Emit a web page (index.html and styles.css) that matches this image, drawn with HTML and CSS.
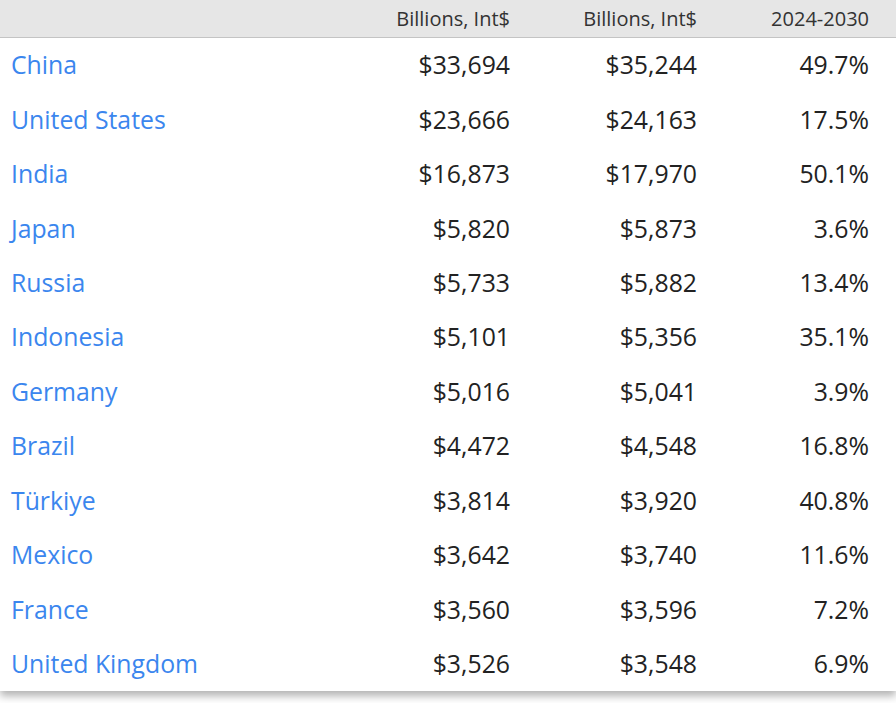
FILE: index.html
```html
<!DOCTYPE html>
<html>
<head>
<meta charset="utf-8">
<link rel="stylesheet" href="styles.css">
</head>
<body>
<div class="card">
<table class="gdp">
<thead>
<tr><th class="name"></th><th>Billions, Int$</th><th>Billions, Int$</th><th>2024-2030</th></tr>
</thead>
<tbody>
<tr><td class="name"><a href="#">China</a></td><td>$33,694</td><td>$35,244</td><td>49.7%</td></tr>
<tr><td class="name"><a href="#">United States</a></td><td>$23,666</td><td>$24,163</td><td>17.5%</td></tr>
<tr><td class="name"><a href="#">India</a></td><td>$16,873</td><td>$17,970</td><td>50.1%</td></tr>
<tr><td class="name"><a href="#">Japan</a></td><td>$5,820</td><td>$5,873</td><td>3.6%</td></tr>
<tr><td class="name"><a href="#">Russia</a></td><td>$5,733</td><td>$5,882</td><td>13.4%</td></tr>
<tr><td class="name"><a href="#">Indonesia</a></td><td>$5,101</td><td>$5,356</td><td>35.1%</td></tr>
<tr><td class="name"><a href="#">Germany</a></td><td>$5,016</td><td>$5,041</td><td>3.9%</td></tr>
<tr><td class="name"><a href="#">Brazil</a></td><td>$4,472</td><td>$4,548</td><td>16.8%</td></tr>
<tr><td class="name"><a href="#">Türkiye</a></td><td>$3,814</td><td>$3,920</td><td>40.8%</td></tr>
<tr><td class="name"><a href="#">Mexico</a></td><td>$3,642</td><td>$3,740</td><td>11.6%</td></tr>
<tr><td class="name"><a href="#">France</a></td><td>$3,560</td><td>$3,596</td><td>7.2%</td></tr>
<tr><td class="name"><a href="#">United Kingdom</a></td><td>$3,526</td><td>$3,548</td><td>6.9%</td></tr>
</tbody>
</table>
</div>
</body>
</html>
```
FILE: styles.css
```css
html, body {
  margin: 0;
  padding: 0;
  background: #ffffff;
}
body {
  font-family: "Open Sans", "Liberation Sans", sans-serif;
  color: #262626;
  padding-bottom: 12px;
}
.card {
  width: 896px;
  background: #ffffff;
  box-shadow: 0 5px 8px rgba(0, 0, 0, 0.3);
}
.gdp {
  width: 100%;
  border-collapse: collapse;
  table-layout: fixed;
}
.gdp th {
  height: 37px;
  padding: 0;
  background: #e6e6e6;
  border-bottom: 1px solid #c4c4c4;
  font-size: 20px;
  font-weight: 400;
  color: #333333;
  text-align: right;
  vertical-align: middle;
}
.gdp td {
  height: 52.45px;
  padding: 0 0 2px 0;
  font-size: 24.8px;
  text-align: right;
  vertical-align: middle;
  color: #222222;
}
.gdp .name {
  text-align: left;
  padding-left: 11px;
  width: 289px;
}
.gdp th:nth-child(2), .gdp td:nth-child(2) { width: 210px; }
.gdp th:nth-child(3), .gdp td:nth-child(3) { width: 187px; }
.gdp th:nth-child(4), .gdp td:nth-child(4) { width: 172px; padding-right: 27px; }
.gdp a {
  color: #3b86ee;
  text-decoration: none;
}
```
